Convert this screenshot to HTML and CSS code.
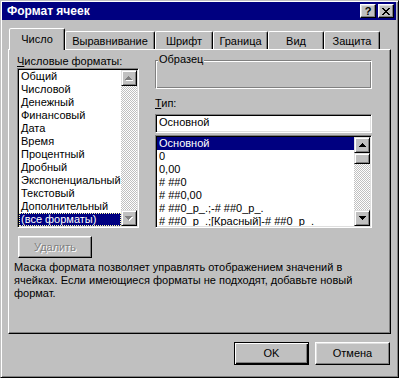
FILE: index.html
```html
<!doctype html>
<html lang="ru">

  <head>
    <meta charset="utf-8">
    <meta name="viewport" content="width=device-width, initial-scale=1">
    <title>Формат ячеек</title>
    <link rel="stylesheet" href="styles.css">
  </head>

  <body>
    <div class="window">
      <div class="titlebar">
        <span class="title">Формат ячеек</span>
        <button class="cap-btn help">?</button>
        <button class="cap-btn close">
          <svg width="8" height="7" viewBox="0 0 8 7"><path d="M0 0h2v1H0zM6 0h2v1H6zM1 1h2v1H1zM5 1h2v1H5zM2 2h4v1H2zM3 3h2v1H3zM2 4h4v1H2zM1 5h2v1H1zM5 5h2v1H5zM0 6h2v1H0zM6 6h2v1H6z"/></svg>
        </button>
      </div>

      <div class="tabs">
        <div class="tab active t-number">Число</div>
        <div class="tab t-align">Выравнивание</div>
        <div class="tab t-font">Шрифт</div>
        <div class="tab t-border">Граница</div>
        <div class="tab t-view">Вид</div>
        <div class="tab t-protect">Защита</div>
      </div>

      <div class="panel">
        <div class="columns">
          <div class="col-left">
            <div class="label"><u>Ч</u>исловые форматы:</div>
            <div class="listbox cats">
              <ul class="items">
                <li>Общий</li>
                <li>Числовой</li>
                <li>Денежный</li>
                <li>Финансовый</li>
                <li>Дата</li>
                <li>Время</li>
                <li>Процентный</li>
                <li>Дробный</li>
                <li>Экспоненциальный</li>
                <li>Текстовый</li>
                <li>Дополнительный</li>
                <li class="selected focused">(все форматы)</li>
              </ul>
              <div class="scrollbar">
                <div class="sb-btn">
                  <svg width="8" height="5" viewBox="0 0 8 5"><path class="hl" d="M4 1h1v1H4zM3 2h3v1H3zM2 3h5v1H2zM1 4h7v1H1z"/><path class="sh" d="M3 0h1v1H3zM2 1h3v1H2zM1 2h5v1H1zM0 3h7v1H0z"/></svg>
                </div>
                <div class="sb-track"></div>
                <div class="sb-btn">
                  <svg width="8" height="5" viewBox="0 0 8 5"><path class="hl" d="M1 1h7v1H1zM2 2h5v1H2zM3 3h3v1H3zM4 4h1v1H4z"/><path class="sh" d="M0 0h7v1H0zM1 1h5v1H1zM2 2h3v1H2zM3 3h1v1H3z"/></svg>
                </div>
              </div>
            </div>
            <button class="btn btn-delete" disabled>Удалить</button>
          </div>

          <div class="col-right">
            <div class="groupbox"><span class="legend">Образец</span></div>
            <div class="label type-label"><u>Т</u>ип:</div>
            <div class="textbox">Основной</div>
            <div class="listbox codes">
              <ul class="items">
                <li class="selected">Основной</li>
                <li>0</li>
                <li>0,00</li>
                <li># ##0</li>
                <li># ##0,00</li>
                <li># ##0_р_.;-# ##0_р_.</li>
                <li># ##0_р_.;[Красный]-# ##0_р_.</li>
              </ul>
              <div class="scrollbar">
                <div class="sb-btn">
                  <svg width="7" height="4" viewBox="0 0 7 4"><path d="M3 0h1v1H3zM2 1h3v1H2zM1 2h5v1H1zM0 3h7v1H0z"/></svg>
                </div>
                <div class="sb-thumb"></div>
                <div class="sb-track"></div>
                <div class="sb-btn">
                  <svg width="7" height="4" viewBox="0 0 7 4"><path d="M0 0h7v1H0zM1 1h5v1H1zM2 2h3v1H2zM3 3h1v1H3z"/></svg>
                </div>
              </div>
            </div>
          </div>
        </div>

        <p class="note">
          Маска формата позволяет управлять отображением значений в<br>
          ячейках. Если имеющиеся форматы не подходят, добавьте новый<br>
          формат.
        </p>
      </div>

      <div class="footer">
        <button class="btn btn-default">OK</button>
        <button class="btn">Отмена</button>
      </div>
    </div>
  </body>

</html>
```

FILE: styles.css
```css
* {
  box-sizing: border-box;
}

html,
body {
  margin: 0;
  padding: 0;
}

body {
  background: #c0c0c0;
  color: #000;
  font-family: "Liberation Sans", Arial, sans-serif;
  font-size: 11px;
  line-height: 13px;
}

button {
  font: inherit;
  color: inherit;
  margin: 0;
  padding: 0;
  background: #c0c0c0;
}

/* window frame */

.window {
  width: 399px;
  height: 378px;
  display: flex;
  flex-direction: column;
  padding: 1px 2px 0 1px;
  background: #c0c0c0;
  border: 1px solid;
  border-color: #c0c0c0 #000 #000 #c0c0c0;
  box-shadow: inset 1px 1px #fff, inset -1px -1px #808080;
}

.titlebar {
  flex: none;
  height: 18px;
  display: flex;
  align-items: center;
  padding: 0 2px 0 5px;
  background: #000080;
  color: #fff;
  font-weight: bold;
}

.title {
  flex: 1;
  font-size: 12px;
}

.cap-btn {
  width: 16px;
  height: 14px;
  display: flex;
  align-items: center;
  justify-content: center;
  color: #000;
  border: 1px solid;
  border-color: #fff #000 #000 #fff;
  box-shadow: inset -1px -1px #808080, inset 1px 1px #dfdfdf;
}

.cap-btn + .cap-btn {
  margin-left: 2px;
}

.help {
  font-weight: bold;
  line-height: 12px;
}

/* tabs */

.tabs {
  flex: none;
  height: 29px;
  display: flex;
  align-items: flex-end;
  padding-left: 7px;
}

.tab {
  height: 18px;
  padding-top: 3px;
  text-align: center;
  border: 1px solid;
  border-bottom: 0;
  border-color: #fff #000 transparent #fff;
  border-radius: 2px 2px 0 0;
  box-shadow: inset -1px 0 #808080;
}

.tab.active {
  position: relative;
  height: 22px;
  margin-bottom: -1px;
  padding-top: 4px;
  background: #c0c0c0;
}

.t-number { width: 56px; }
.t-align { width: 90px; }
.t-font { width: 58px; }
.t-border { width: 55px; }
.t-view { width: 56px; }
.t-protect { width: 56px; }

.panel {
  flex: none;
  width: 383px;
  height: 285px;
  margin-left: 6px;
  padding-top: 5px;
  border: 1px solid;
  border-color: #fff #000 #000 #fff;
  box-shadow: inset -1px -1px #808080;
}

.columns {
  display: flex;
  gap: 16px;
  margin-left: 8px;
}

.col-left {
  width: 122px;
  display: flex;
  flex-direction: column;
  align-items: flex-start;
}

.col-right {
  width: 217px;
}

/* lists */

.listbox {
  display: flex;
  padding: 1px;
  overflow: hidden;
  background: #fff;
  border: 1px solid;
  border-color: #808080 #fff #fff #808080;
  box-shadow: inset 1px 1px #000, inset -1px -1px #dfdfdf;
}

.cats {
  width: 122px;
  height: 160px;
}

.codes {
  height: 93px;
  margin-top: 2px;
}

.items {
  flex: 1;
  margin: 0;
  padding: 0;
  list-style: none;
  overflow: hidden;
}

.items li {
  height: 13px;
  padding-left: 2px;
  white-space: nowrap;
}

.items .selected {
  background: #000080;
  color: #fff;
}

.items .focused {
  outline: 1px dotted #ffffa0;
  outline-offset: -1px;
}

.scrollbar {
  flex: none;
  width: 16px;
  display: flex;
  flex-direction: column;
  background: repeating-conic-gradient(#c0c0c0 0 25%, #fff 0 50%) 0 0 / 2px 2px;
}

.sb-btn,
.sb-thumb {
  flex: none;
  height: 16px;
  display: flex;
  align-items: center;
  justify-content: center;
  background: #c0c0c0;
  border: 1px solid;
  border-color: #dfdfdf #000 #000 #dfdfdf;
  box-shadow: inset 1px 1px #fff, inset -1px -1px #808080;
}

.sb-thumb {
  height: 11px;
}

.sb-track {
  flex: 1;
}

.sb-btn .hl {
  fill: #fff;
}

.sb-btn .sh {
  fill: #808080;
}

/* right column */

.groupbox {
  height: 29px;
  margin-top: 5px;
  border: 1px solid;
  border-color: #808080 #fff #fff #808080;
  box-shadow: inset 1px 1px #fff, inset -1px -1px #808080;
}

.legend {
  display: table;
  margin: -8px 0 0 2px;
  padding: 0 1px;
  background: #c0c0c0;
}

.type-label {
  margin-top: 8px;
}

.textbox {
  height: 19px;
  margin-top: 4px;
  padding: 1px 0 0 3px;
  background: #fff;
  border: 1px solid;
  border-color: #808080 #fff #fff #808080;
  box-shadow: inset 1px 1px #000, inset -1px -1px #dfdfdf;
}

/* buttons */

.btn {
  width: 75px;
  height: 23px;
  border: 1px solid;
  border-color: #fff #000 #000 #fff;
  box-shadow: inset -1px -1px #808080, inset 1px 1px #dfdfdf;
}

.btn-delete {
  width: 74px;
  height: 22px;
  margin: 8px 0 0 1px;
  color: #808080;
  text-shadow: 1px 1px #fff;
}

.btn-default {
  border-color: #000;
  box-shadow: inset 1px 1px #fff, inset -1px -1px #000, inset -2px -2px #808080;
}

.note {
  margin: 3px 0 0 5px;
}

.footer {
  display: flex;
  justify-content: flex-end;
  gap: 6px;
  margin-top: 8px;
  padding-right: 6px;
}
```
